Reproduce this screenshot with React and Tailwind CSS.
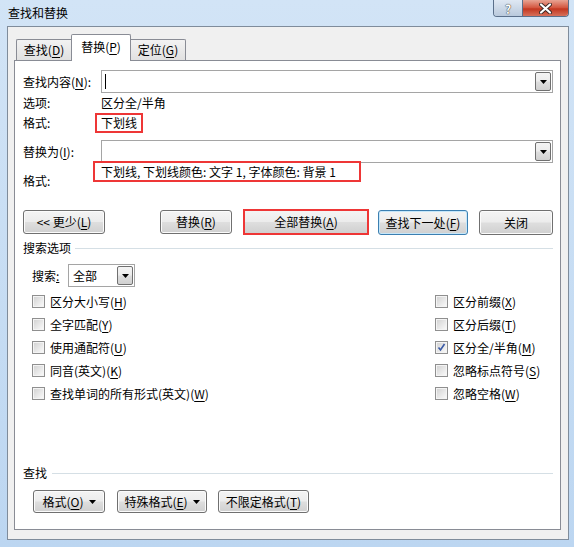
import React from 'react';

const face = 'bg-[linear-gradient(to_bottom,#f4f4f4_0%,#ececec_48%,#dedede_52%,#d0d0d0_100%)]';

function Acc({ k }) {
  return (
    <>
      (<u className="underline-offset-2">{k}</u>)
    </>
  );
}

function Triangle({ className = '' }) {
  return (
    <svg width="7" height="4" viewBox="0 0 7 4" className={className}>
      <path d="M0 0h7L3.5 4z" fill="#000" />
    </svg>
  );
}

function Button({ children, className = '', primary }) {
  return (
    <div
      className={`flex items-center justify-center rounded-[3px] border ${face} ${
        primary
          ? 'border-[#3c7fb1] shadow-[inset_0_0_0_1px_#c6e7fa]'
          : 'border-[#707070] shadow-[inset_0_0_0_1px_#fbfbfb]'
      } ${className}`}
    >
      {children}
    </div>
  );
}

function DropButton({ className = '' }) {
  return (
    <div className={`flex items-center justify-center w-[16px] border border-[#707070] rounded-[2px] ${face} ${className}`}>
      <Triangle />
    </div>
  );
}

function Check({ label, checked }) {
  return (
    <div className="flex items-center h-[23px] gap-[5px]">
      <div className="w-[13px] h-[13px] border border-[#8f8f8f] bg-[#f4f4f4] p-[1px]">
        <div className="relative w-full h-full bg-[linear-gradient(135deg,#d4d4d4,#f8f8f8)]">
          {checked && (
            <svg viewBox="0 0 9 9" className="absolute inset-0 w-full h-full">
              <path d="M1.5 4.5l2 2.5 4-6" fill="none" stroke="#3a5aa6" strokeWidth="1.6" />
            </svg>
          )}
        </div>
      </div>
      <span>{label}</span>
    </div>
  );
}

export default function App() {
  return (
    <div className="w-[574px] h-[547px] flex flex-col bg-[linear-gradient(to_bottom,#d2e4f6,#bcd6f1)] text-[12px] leading-[16px] text-black font-['Microsoft_YaHei','Noto_Sans_CJK_SC',sans-serif]">
      {/* Title bar */}
      <div className="flex h-[26px] shrink-0">
        <div className="pl-[8px] pt-[5px] text-[12px]">查找和替换</div>
        <div className="ml-auto mr-[5px] flex h-[17px] rounded-b-[4px] border border-t-0 border-[#5a6f8a] overflow-hidden">
          <div className="w-[29px] flex items-center justify-center bg-[linear-gradient(to_bottom,#dfe8f3,#b9c9dc)] border-r border-[#5a6f8a] text-white font-bold text-[12px] leading-[13px] [text-shadow:0_0_1px_#333,0_0_1px_#333]">
            ?
          </div>
          <div className="w-[45px] flex items-center justify-center bg-[linear-gradient(to_bottom,#e8a493,#d3533c_50%,#c2361f_55%,#d6705b)]">
            <svg width="13" height="11" viewBox="0 0 13 11">
              <path d="M2 1.5l9 8M11 1.5l-9 8" stroke="#3d2a27" strokeWidth="4" strokeLinecap="round" />
              <path d="M2 1.5l9 8M11 1.5l-9 8" stroke="#fff" strokeWidth="2.2" strokeLinecap="round" />
            </svg>
          </div>
        </div>
      </div>

      {/* Body */}
      <div className="flex-1 ml-[7px] mr-[5px] mb-[7px] border border-[#7f8c9b] bg-[#f0f0f0] flex flex-col pt-[7px] pl-[6px] pr-[7px] pb-[9px]">
        {/* Tabs */}
        <div className="flex items-end h-[26px] pl-[2px]">
          <div className="w-[55px] h-[21px] border border-r-0 border-b-0 border-[#898c95] rounded-tl-[2px] bg-[linear-gradient(to_bottom,#f2f2f2,#e1e1e1)] flex items-center justify-center">
            查找<Acc k="D" />
          </div>
          <div className="relative z-10 w-[60px] h-[27px] -mb-[1px] border border-b-0 border-[#898c95] rounded-t-[2px] bg-white flex items-center justify-center pb-[2px]">
            替换<Acc k="P" />
          </div>
          <div className="w-[55px] h-[21px] border border-l-0 border-b-0 border-[#898c95] rounded-tr-[2px] bg-[linear-gradient(to_bottom,#f2f2f2,#e1e1e1)] flex items-center justify-center">
            定位<Acc k="G" />
          </div>
        </div>

        {/* Panel */}
        <div className="flex-1 border border-[#898c95] bg-white flex flex-col pt-[9px] pl-[8px] pr-[7px]">
          <div className="flex items-center h-[23px]">
            <div className="w-[78px]">
              查找内容<Acc k="N" />:
            </div>
            <div className="flex-1 h-full border border-[#a5a5a5] bg-white flex items-stretch p-[1px]">
              <div className="flex-1 flex items-center pl-[2px]">
                <div className="w-px h-[15px] bg-black" />
              </div>
              <DropButton />
            </div>
          </div>
          <div className="flex items-center h-[20px]">
            <div className="w-[78px]">选项:</div>
            <div>区分全/半角</div>
          </div>
          <div className="flex items-center h-[20px]">
            <div className="w-[78px]">格式:</div>
            <div className="-ml-[6px] h-[20px] border-2 border-[#ee3636] px-[4px] flex items-center">下划线</div>
          </div>

          <div className="flex items-center h-[23px] mt-[7px]">
            <div className="w-[78px]">
              替换为<Acc k="I" />:
            </div>
            <div className="flex-1 h-full border border-[#a5a5a5] bg-white flex items-stretch justify-end p-[1px]">
              <DropButton />
            </div>
          </div>
          <div className="flex items-start h-[47px]">
            <div className="w-[78px] mt-[10px]">格式:</div>
            <div className="relative z-10 -ml-[8px] -mt-[2px] w-[268px] h-[21px] border-2 border-[#ee3636] bg-white pl-[6px] flex items-center">
              下划线, 下划线颜色: 文字 1, 字体颜色: 背景 1
            </div>
          </div>

          {/* Action buttons */}
          <div className="flex items-start h-[24px]">
            <Button className="w-[82px] h-[24px]">
              &lt;&lt; 更少<Acc k="L" />
            </Button>
            <Button className="w-[72px] h-[24px] ml-[55px]">
              替换<Acc k="R" />
            </Button>
            <div className="ml-[11px] -mt-[1px] w-[126px] h-[26px] border-2 border-[#ee3636]">
              <div className={`w-full h-full flex items-center justify-center ${face}`}>
                全部替换<Acc k="A" />
              </div>
            </div>
            <Button primary className="w-[90px] h-[25px] ml-[9px]">
              查找下一处<Acc k="F" />
            </Button>
            <Button className="w-[74px] h-[25px] ml-[11px]">关闭</Button>
          </div>

          {/* Search options */}
          <div className="flex items-center h-[16px] mt-[6px]">
            <span>搜索选项</span>
            <div className="flex-1 h-px bg-[#d5dfe5] ml-[4px]" />
          </div>
          <div className="flex items-center h-[23px] mt-[8px] ml-[9px]">
            <div className="w-[36px]">
              搜索<u>:</u>
            </div>
            <div className="w-[67px] h-full border border-[#a5a5a5] bg-white flex items-stretch p-[1px]">
              <div className="flex-1 flex items-center pl-[3px]">全部</div>
              <DropButton />
            </div>
          </div>

          <div className="flex mt-[3px] ml-[9px]">
            <div className="w-[403px] flex flex-col">
              <Check label={<>区分大小写<Acc k="H" /></>} />
              <Check label={<>全字匹配<Acc k="Y" /></>} />
              <Check label={<>使用通配符<Acc k="U" /></>} />
              <Check label={<>同音(英文)<Acc k="K" /></>} />
              <Check label={<>查找单词的所有形式(英文)<Acc k="W" /></>} />
            </div>
            <div className="flex flex-col">
              <Check label={<>区分前缀<Acc k="X" /></>} />
              <Check label={<>区分后缀<Acc k="T" /></>} />
              <Check checked label={<>区分全/半角<Acc k="M" /></>} />
              <Check label={<>忽略标点符号<Acc k="S" /></>} />
              <Check label={<>忽略空格<Acc k="W" /></>} />
            </div>
          </div>

          {/* Find section */}
          <div className="flex items-center h-[16px] mt-[60px]">
            <span>查找</span>
            <div className="flex-1 h-px bg-[#d5dfe5] ml-[5px]" />
          </div>
          <div className="flex items-center h-[23px] mt-[9px] ml-[10px] gap-[12px]">
            <Button className="w-[72px] h-[23px] gap-[5px]">
              <span>
                格式<Acc k="O" />
              </span>
              <Triangle />
            </Button>
            <Button className="w-[90px] h-[23px] gap-[5px]">
              <span>
                特殊格式<Acc k="E" />
              </span>
              <Triangle />
            </Button>
            <Button className="w-[91px] h-[23px] -ml-[1px]">
              不限定格式<Acc k="T" />
            </Button>
          </div>
        </div>
      </div>
    </div>
  );
}
